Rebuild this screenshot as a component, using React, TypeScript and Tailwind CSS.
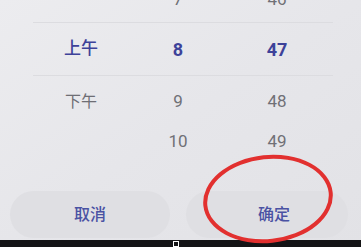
const font = "font-['Roboto','Noto_Sans_CJK_SC',sans-serif]";

type Row = { period: string; hour: string; minute: string; active?: boolean; h: string };

const rows: Row[] = [
  { period: "", hour: "7", minute: "46", h: "h-[44px] -mt-[22px]" },
  { period: "上午", hour: "8", minute: "47", active: true, h: "h-[52px]" },
  { period: "下午", hour: "9", minute: "48", h: "h-[52px]" },
  { period: "", hour: "10", minute: "49", h: "h-[28px]" },
];

export default function App() {
  return (
    <div className={`relative w-[361px] h-[247px] overflow-hidden bg-gradient-to-br from-[#ececef] via-[#e6e6ea] to-[#e2e2e6] ${font}`}>
      {/* picker */}
      <div className="flex flex-col">
        {rows.map((r, i) => (
          <div key={i}>
            <div className={`grid grid-cols-[160px_36px_162px] items-center ${r.h}`}>
              <span
                className={`text-center pl-[2px] ${
                  r.active ? "text-[#3d4299] font-medium text-[17px]" : "text-[#6e6e74] text-[16px]"
                }`}
              >
                {r.period}
              </span>
              <span
                className={`text-center ${
                  r.active ? "text-[#3d4299] font-bold text-[18px]" : "text-[#707076] text-[17px]"
                }`}
              >
                {r.hour}
              </span>
              <span
                className={`text-center ${
                  r.active ? "text-[#3d4299] font-bold text-[18px]" : "text-[#707076] text-[17px]"
                }`}
              >
                {r.minute}
              </span>
            </div>
            {(i === 0 || i === 1) && (
              <div className="ml-[33px] mr-[28px] h-px bg-[#dcdce0]" />
            )}
          </div>
        ))}
      </div>

      {/* buttons */}
      <div className="mt-[35px] flex gap-[16px] px-[10px]">
        <button className="w-[160px] h-[47px] rounded-full bg-[#dfdfe3] text-[16px] font-medium text-[#4a52a3]">
          取消
        </button>
        <button className="w-[162px] h-[47px] rounded-full bg-[#dfdfe3] text-[16px] font-medium text-[#4a52a3] pl-[14px]">
          确定
        </button>
      </div>

      {/* bottom bezel */}
      <div className="absolute left-0 right-0 bottom-0 h-[7px] bg-[#141416]">
        <div className="absolute left-[173px] top-[1px] w-[6px] h-[6px] border border-white bg-[#141416]" />
      </div>

      {/* red marker circle */}
      <div className="absolute left-[203px] top-[155px] w-[130px] h-[88px] rounded-[50%] border-[4px] border-[#e2302f] -rotate-[6deg]" />
    </div>
  );
}
